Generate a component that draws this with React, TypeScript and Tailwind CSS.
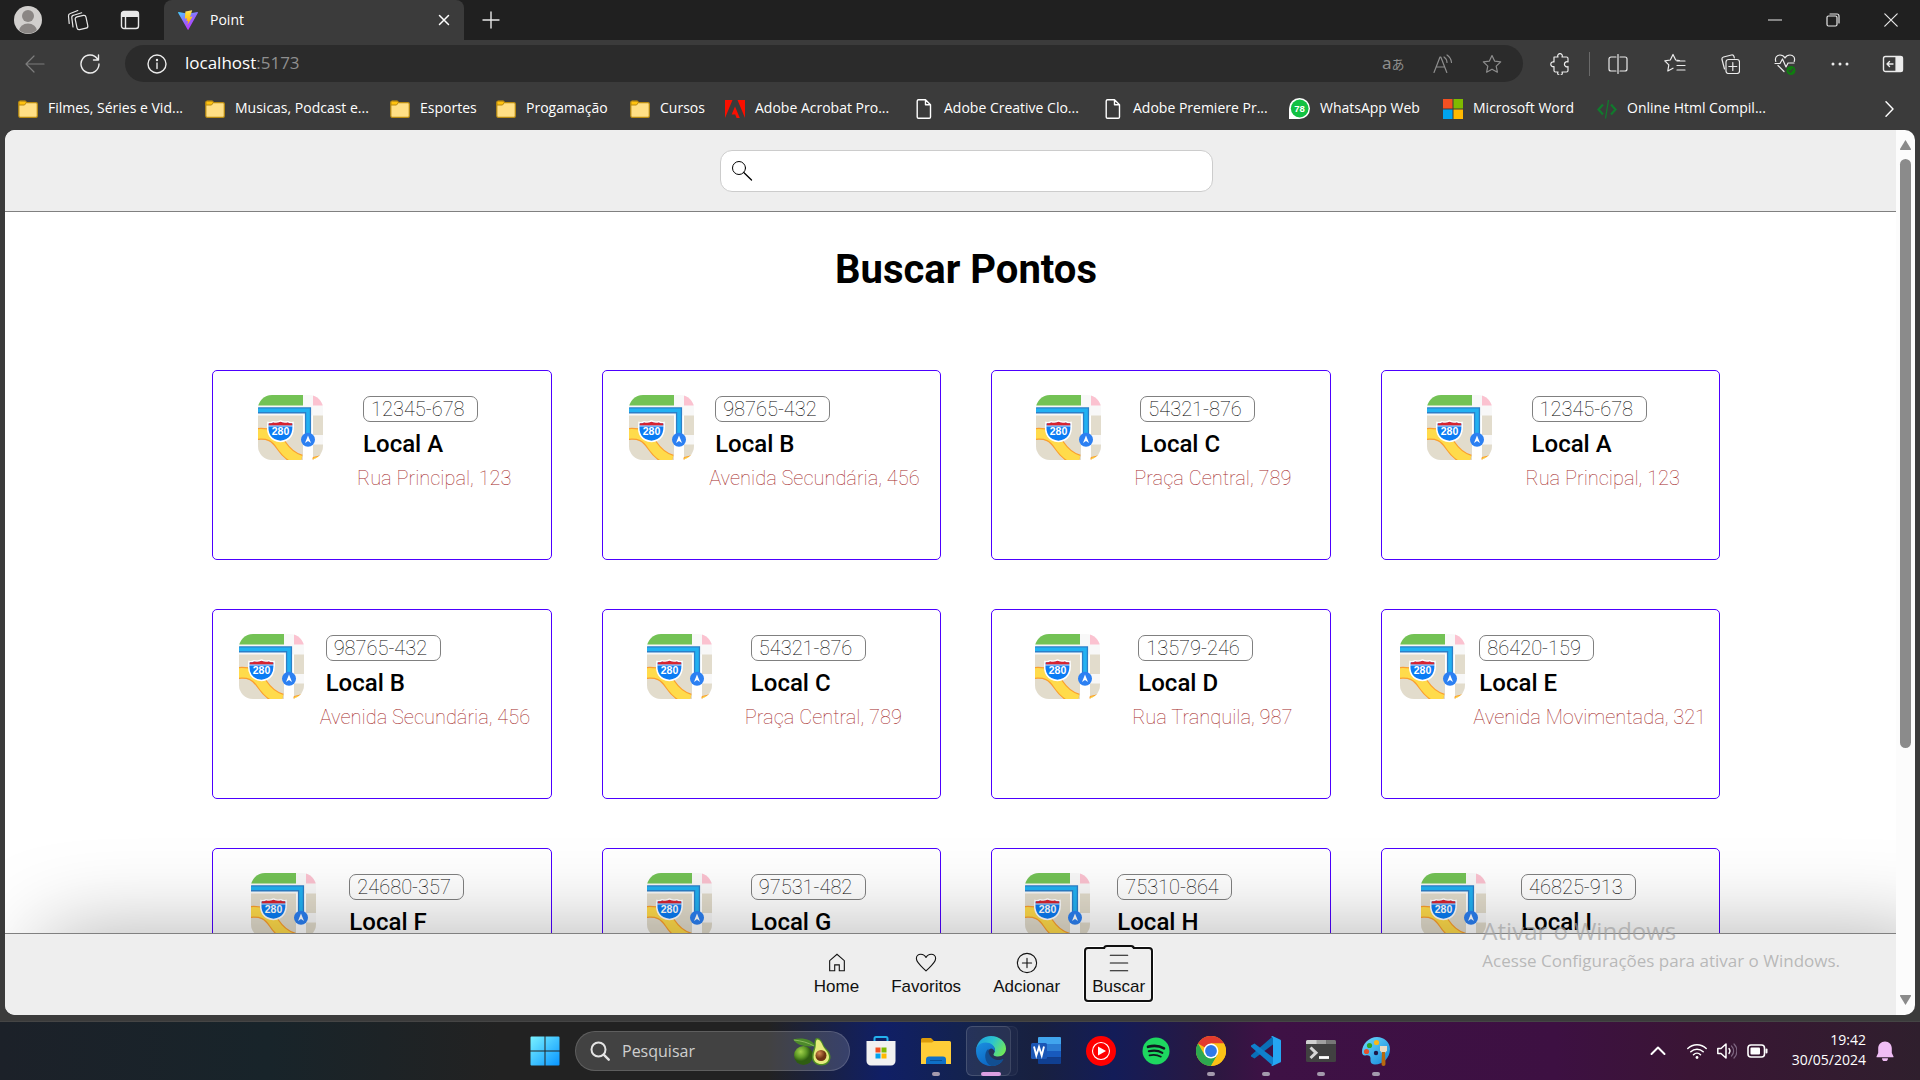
import React from "react";

const UI = "font-['Open_Sans',sans-serif]";

type IconProps = { className?: string; children: React.ReactNode; box?: string };

function Line({ className = "size-5", children, box = "0 0 20 20" }: IconProps) {
  return (
    <svg viewBox={box} className={className} fill="none" stroke="currentColor" strokeWidth="1.2" strokeLinecap="round" strokeLinejoin="round" aria-hidden="true">
      {children}
    </svg>
  );
}

/* ---------- Browser chrome ---------- */

function ViteLogo() {
  return (
    <svg viewBox="0 0 20 20" className="size-5" aria-hidden="true">
      <defs>
        <linearGradient id="viteA" x1="0" y1="0" x2="0.6" y2="1">
          <stop offset="0" stopColor="#41d1ff" />
          <stop offset="0.5" stopColor="#8f6bff" />
          <stop offset="1" stopColor="#bd34fe" />
        </linearGradient>
        <linearGradient id="viteB" x1="0" y1="0" x2="0" y2="1">
          <stop offset="0" stopColor="#ffea83" />
          <stop offset="0.2" stopColor="#ffdd35" />
          <stop offset="1" stopColor="#ffa800" />
        </linearGradient>
      </defs>
      <path d="M19.8 2.9 10.5 19.6a.5.5 0 0 1-.9 0L.2 2.9a.5.5 0 0 1 .5-.8L10 3.8l9.3-1.7a.5.5 0 0 1 .5.8Z" fill="url(#viteA)" />
      <path d="M14.2.2 7.4 1.5l-.5 7.2 2.2-.4-.6 3 1.7-.5-.9 4.1 5.3-8.3-2.6.5Z" fill="url(#viteB)" />
    </svg>
  );
}

function TabStrip() {
  return (
    <div className="flex h-10 shrink-0 items-center bg-[#202020] text-[#e8e8e8]">
      <div className="flex h-10 w-[164px] shrink-0 items-center gap-[25px] pl-[14px]">
        <button aria-label="Perfil">
          <svg viewBox="0 0 28 28" className="size-7" aria-hidden="true">
            <defs><clipPath id="avatar"><circle cx="14" cy="14" r="13.5" /></clipPath></defs>
            <circle cx="14" cy="14" r="14" fill="#d1cfcd" />
            <g clipPath="url(#avatar)" fill="#8a8684">
              <circle cx="14" cy="10" r="6" />
              <ellipse cx="14" cy="25" rx="9" ry="7.5" />
            </g>
          </svg>
        </button>
        <button aria-label="Espaços de trabalho">
          <Line className="size-[22px]" box="0 0 22 22">
            <rect x="9" y="7" width="11" height="13" rx="2.2" transform="rotate(-12 14.5 13.5)" />
            <path d="M6 18 4.800 8.800a2.400 2.400 0 0 1 1.900-2.600l8-2.400" />
            <path d="M2.200 14.500 1.500 7a2.400 2.400 0 0 1 1.800-2.500l7.500-3" />
          </Line>
        </button>
        <button aria-label="Menu de guias" className="ml-1.5">
          <Line>
            <rect x="1.5" y="1.5" width="17" height="17" rx="2.5" strokeWidth="1.4" />
            <path d="M2 2.5h16v4H2Z" fill="currentColor" />
            <path d="M5.500 7v11" strokeWidth="1.4" />
          </Line>
        </button>
      </div>
      <div className={`flex h-10 w-[300px] shrink-0 items-center rounded-t-lg bg-[#3b3b3b] pr-2.5 pl-[14px] text-[14px] text-white ${UI}`}>
        <ViteLogo />
        <span className="ml-3 flex-1 pb-px">Point</span>
        <button aria-label="Fechar guia" className="grid size-5 place-items-center">
          <Line className="size-3" box="0 0 12 12"><path d="m1.500 1.500 9 9m0-9-9 9" strokeWidth="1.5" /></Line>
        </button>
      </div>
      <button aria-label="Nova guia" className="ml-[18px]">
        <Line className="size-[18px]" box="0 0 18 18"><path d="M9 1v16M1 9h16" strokeWidth="1.4" /></Line>
      </button>
      <div className="ml-auto flex h-10">
        <button aria-label="Minimizar" className="grid w-[58px] place-items-center"><Line className="size-3.5" box="0 0 14 14"><path d="M.5 7h13" /></Line></button>
        <button aria-label="Restaurar" className="grid w-[58px] place-items-center">
          <Line className="size-3.5" box="0 0 14 14"><rect x="1" y="3" width="10" height="10" rx="1.5" /><path d="M4 1h7a2 2 0 0 1 2 2v7" /></Line>
        </button>
        <button aria-label="Fechar" className="grid w-[58px] place-items-center"><Line className="size-3.5" box="0 0 14 14"><path d="m.8.8 12.400 12.400m0-12.400L.8 13.200" /></Line></button>
      </div>
    </div>
  );
}

const STAR = "m10 1.500 2.600 5.600 6.100.8-4.500 4.200 1.200 6.100L10 15.200l-5.400 3 1.200-6.100L1.300 7.900l6.100-.8Z";

function Toolbar() {
  return (
    <div className="flex h-[47px] shrink-0 items-center text-[#ececec]">
      <button aria-label="Voltar" className="ml-[25px] text-[#7d7d7d]"><Line className="size-5"><path d="M19 10H1.500M9 2 1 10l8 8" /></Line></button>
      <button aria-label="Atualizar" className="ml-[35px]"><Line className="size-5"><path d="M17.500 5A9 9 0 1 0 19 10M18.500 1v5h-5" strokeWidth="1.4" /></Line></button>
      <div className="ml-[25px] flex h-[37px] flex-1 items-center rounded-full bg-[#2b2b2b] pr-[21px] pl-[22px]">
        <Line className="size-5"><circle cx="10" cy="10" r="9" strokeWidth="1.4" /><path d="M10 9v5.500" strokeWidth="1.4" /><circle cx="10" cy="6" r=".6" fill="currentColor" /></Line>
        <span className={`ml-[18px] flex-1 pb-px text-[17px] leading-6 text-[#8f8f8f] ${UI}`}><span className="text-white">localhost</span>:5173</span>
        <div className="flex items-center gap-[29px] text-[#8e8e8e]">
          <button aria-label="Traduzir" className="flex w-[22px] items-baseline whitespace-nowrap"><span className="font-['Noto_Sans',sans-serif] text-[17px] leading-5">a</span><span className="font-['Noto_Sans_CJK_JP',sans-serif] text-[13px] leading-5">あ</span></button>
          <button aria-label="Ler em voz alta">
            <Line><path d="M1 18.500 7 3h.8l6 15.500M3.300 13h8.300M11 3a7 7 0 0 1 3 5.500M14 1a10 10 0 0 1 4.500 7.500" /></Line>
          </button>
          <button aria-label="Adicionar aos favoritos"><Line><path d={STAR} /></Line></button>
        </div>
      </div>
      <div className="flex items-center pr-[16px] pl-[26px]">
        <button aria-label="Extensões">
          <Line className="size-[22px]" box="0 0 22 22"><path d="M5 4h4a2.300 2.300 0 1 1 4 0h4.500a1.500 1.500 0 0 1 1.500 1.500V9a2.500 2.500 0 1 0 0 4.500v4a1.500 1.500 0 0 1-1.500 1.500H13a2.300 2.300 0 1 1-4 0H6.500A1.500 1.500 0 0 1 5 17.500V13.500a2.400 2.400 0 1 1 0-4.500Z" /></Line>
        </button>
        <span className="ml-[18px] h-6 w-px bg-[#6a6a6a]" />
        <div className="ml-[18px] flex items-center gap-[34px]">
          <button aria-label="Tela dividida"><Line><path d="M8 3H3a2 2 0 0 0-2 2v10a2 2 0 0 0 2 2h5M12 3h5a2 2 0 0 1 2 2v10a2 2 0 0 1-2 2h-5M10 .5v19" /></Line></button>
          <button aria-label="Favoritos" className="ml-0.5"><Line className="size-[22px]" box="0 0 22 22"><path d="M15.500 7.500 11.700 7 9 1.500 6.300 7l-5.500.8 4 4-1 6.200L9 15.200M13 8h8M13 12.500h8M13 17h8" /></Line></button>
          <button aria-label="Coleções"><Line><path d="M4.500 15 2 5.500A2.200 2.200 0 0 1 3.500 3l8-2A2.200 2.200 0 0 1 14 2.500l.3 1.500" /><rect x="6" y="5.5" width="13.5" height="14" rx="2.5" /><path d="M12.800 8.500v8M8.800 12.500h8" /></Line></button>
          <button aria-label="Desempenho">
            <Line className="size-[22px]" box="0 0 22 22"><path d="M1.800 8.500C.5 4.500 3 2 6 2c2.500 0 4 1.200 5 3 1-1.800 2.500-3 5-3 3.200 0 5.500 2.500 4.200 6.500M4 12.500l6 6M1 10.500h5L8.500 6l3.500 8 2-4h6" /><circle cx="17" cy="17.5" r="4.500" fill="#107c10" stroke="none" /><path d="m15 17.500 1.500 1.500 2.500-3" stroke="#3b3b3b" /></Line>
          </button>
          <button aria-label="Configurações e mais"><Line><g fill="currentColor" stroke="none"><circle cx="3" cy="10" r="1.5" /><circle cx="10" cy="10" r="1.5" /><circle cx="17" cy="10" r="1.5" /></g></Line></button>
          <button aria-label="Barra lateral" className="-ml-0.5"><Line className="size-[22px]" box="0 0 22 22"><rect x="1.5" y="3.5" width="19" height="15" rx="2" strokeWidth="1.4" /><path d="M14 4h6v14h-6Z" fill="currentColor" /><path d="M11 11H5M7.500 8.500 5 11l2.500 2.500" strokeWidth="1.4" /></Line></button>
        </div>
      </div>
    </div>
  );
}

function Folder() {
  return (
    <svg viewBox="0 0 20 20" className="size-5" aria-hidden="true">
      <path d="M.8 3.500A1.500 1.500 0 0 1 2.300 2h5l1.500 1.700H18a1.300 1.300 0 0 1 1.300 1.300v12a1.300 1.300 0 0 1-1.300 1.300H2A1.300 1.300 0 0 1 .8 17Z" fill="#ffdf85" stroke="#b98a10" strokeWidth="1.2" />
      <path d="M1 6V3.500A1.300 1.300 0 0 1 2.300 2.200H7l1.300 1.500L6.500 6Z" fill="#ffc20e" stroke="#b98a10" />
    </svg>
  );
}
const PageIcon = () => (
  <Line><path d="M4.500.8h7l5 5V18a1.300 1.300 0 0 1-1.300 1.300H4.500A1.300 1.300 0 0 1 3.200 18V2A1.300 1.300 0 0 1 4.500.8ZM11.500.8v5h5" strokeWidth="1.4" /></Line>
);
const Acrobat = () => (
  <svg viewBox="0 0 20 20" className="size-5" fill="#fa0f00" aria-hidden="true"><path d="M0 1h7.500L0 19ZM12.500 1H20v18ZM10 7.500 14.800 19h-3.200l-1.400-3.600H6.700Z" /></svg>
);
const WhatsApp = () => (
  <svg viewBox="0 0 22 22" className="size-[21px]" aria-hidden="true">
    <path d="M0 22V11a11 11 0 1 1 11 11Z" fill="#fff" />
    <circle cx="11.2" cy="11" r="9.3" fill="#12c143" />
    <text x="11" y="14.7" textAnchor="middle" fontSize="10" fontWeight="700" fill="#fff" fontFamily="Liberation Sans, sans-serif">78</text>
  </svg>
);
const Microsoft = () => (
  <svg viewBox="0 0 20 20" className="size-5" aria-hidden="true">
    <path d="M0 0h9.500v9.500H0Z" fill="#f25022" /><path d="M10.500 0H20v9.500h-9.500Z" fill="#7fba00" /><path d="M0 10.500h9.500V20H0Z" fill="#00a4ef" /><path d="M10.500 10.500H20V20h-9.500Z" fill="#ffb900" />
  </svg>
);
const CodeIcon = () => (
  <svg viewBox="0 0 20 20" className="size-5" fill="none" stroke="#117a2d" strokeWidth="2" aria-hidden="true"><path d="m6 5.500-4.500 5L6 15.500M14 5.500l4.500 5-4.500 5" strokeWidth="2.2" /><path d="M11.500 1 8.500 19.500" strokeWidth="1.3" /></svg>
);

const BOOKMARKS: { label: string; width: string; icon: React.ReactNode }[] = [
  { label: "Filmes, Séries e Vid...", width: "w-[187px]", icon: <Folder /> },
  { label: "Musicas, Podcast e...", width: "w-[185px]", icon: <Folder /> },
  { label: "Esportes", width: "w-[106px]", icon: <Folder /> },
  { label: "Progamação", width: "w-[134px]", icon: <Folder /> },
  { label: "Cursos", width: "w-[95px]", icon: <Folder /> },
  { label: "Adobe Acrobat Pro...", width: "w-[189px]", icon: <Acrobat /> },
  { label: "Adobe Creative Clo...", width: "w-[189px]", icon: <PageIcon /> },
  { label: "Adobe Premiere Pr...", width: "w-[186px]", icon: <PageIcon /> },
  { label: "WhatsApp Web", width: "w-[154px]", icon: <WhatsApp /> },
  { label: "Microsoft Word", width: "w-[154px]", icon: <Microsoft /> },
  { label: "Online Html Compil...", width: "w-[187px]", icon: <CodeIcon /> },
];

function Bookmarks() {
  return (
    <nav className={`flex h-[43px] shrink-0 items-center pl-[18px] text-[14px] text-white ${UI}`}>
      {BOOKMARKS.map((b) => (
        <a key={b.label} href="#" className={`flex shrink-0 items-center gap-2.5 whitespace-nowrap ${b.width}`}>{b.icon}<span className="pb-0.5">{b.label}</span></a>
      ))}
      <button aria-label="Mais favoritos" className="mr-[22px] ml-auto"><Line className="h-4 w-[18px]" box="0 0 18 16"><path d="m6 .8 7 7.200-7 7.200" strokeWidth="1.4" /></Line></button>
    </nav>
  );
}

/* ---------- Page ---------- */

function MapIcon() {
  return (
    <svg viewBox="0 0 65 65" className="size-[65px] shrink-0" aria-hidden="true">
      <defs><clipPath id="mapClip"><rect width="65" height="65" rx="14" /></clipPath></defs>
      <g clipPath="url(#mapClip)">
        <rect width="65" height="65" fill="#f8f8f8" />
        <rect width="45" height="10.5" fill="#73c255" />
        <rect x="55" width="10" height="10.5" fill="#fbc2d0" />
        <rect y="20.5" width="45" height="45" fill="#e2dccc" />
        <rect x="55" y="20.5" width="10" height="19.5" fill="#e2dccc" />
        <rect x="55" y="49.5" width="10" height="16" fill="#e2dccc" />
        <path d="M-1 39c12-1 18 2 24 11 5 7.500 11 13 20 15.500" fill="none" stroke="#fb9f2f" strokeWidth="12" />
        <path d="M-1 39c12-1 18 2 24 11 5 7.500 11 13 20 15.500" fill="none" stroke="#ffdb4b" strokeWidth="9.5" />
        <rect x="45" y="20.5" width="10" height="45" fill="#fff" />
        <path d="M55 62.500q5-.5 10-3.500v6H55Z" fill="#ffdb4b" stroke="#fb9f2f" />
        <path d="M0 15.300h50V40" fill="none" stroke="#2b7fc8" strokeWidth="6.2" />
        <path d="M0 15.300h50V40" fill="none" stroke="#22b1f2" strokeWidth="3.6" />
        <path d="M10 27.500q2.500.8 5-.8 4 1.300 7.500-.7 3.500 2 7.500.7 2.500 1.600 5 .8Q37 45 22.500 46.500 7.500 45 10 27.500Z" fill="#0b7cf4" stroke="#fff" strokeWidth="1.5" />
        <path d="M10.800 28.200q2 .5 4.400-.8 4 1.200 7.300-.7 3.500 1.900 7.300.7 2.400 1.300 4.400.8v2.300H10.800Z" fill="#d8232f" />
        <path d="M10 31h25" stroke="#fff" strokeWidth=".8" />
        <text x="22.5" y="40" textAnchor="middle" fontSize="10.5" fontWeight="700" fill="#fff" fontFamily="Liberation Sans, sans-serif">280</text>
        <circle cx="50" cy="44.7" r="7" fill="#2c80f2" />
        <path d="m50 40.500 3 7.500-3-2-3 2Z" fill="#fff" />
      </g>
    </svg>
  );
}

const PLACES = [
  ["12345-678", "Local A", "Rua Principal, 123"],
  ["98765-432", "Local B", "Avenida Secundária, 456"],
  ["54321-876", "Local C", "Praça Central, 789"],
  ["12345-678", "Local A", "Rua Principal, 123"],
  ["98765-432", "Local B", "Avenida Secundária, 456"],
  ["54321-876", "Local C", "Praça Central, 789"],
  ["13579-246", "Local D", "Rua Tranquila, 987"],
  ["86420-159", "Local E", "Avenida Movimentada, 321"],
  ["24680-357", "Local F", "Avenida Central, 654"],
  ["97531-482", "Local G", "Praça Central, 147"],
  ["75310-864", "Local H", "Rua das Palmeiras, 55"],
  ["46825-913", "Local I", "Rua das Flores, 567"],
];

function PlaceCard({ code, name, address }: { code: string; name: string; address: string }) {
  return (
    <article className="flex h-[190px] items-start justify-evenly rounded-[5px] border border-[#4d00ff] pt-6">
      <div className="pl-3"><MapIcon /></div>
      <div className="flex flex-col items-start pl-px pr-1.5">
        <span className="mt-px ml-1.5 h-[26px] w-[115px] rounded-[7px] border border-[#808080] pl-[7px] text-[20px] leading-6 font-thin text-black">{code}</span>
        <h2 className="mt-2 ml-1.5 text-[24px] leading-7 font-medium text-black">{name}</h2>
        <p className="mt-2 text-[20px] leading-6 font-thin whitespace-nowrap text-[#a52a2a]">{address}</p>
      </div>
    </article>
  );
}

const NAV: { label: string; active?: boolean; icon: React.ReactNode }[] = [
  { label: "Home", icon: <path d="M4 20.500V9.500L12 2.500l8 7v11h-5.500V14h-5v6.500Z" strokeLinejoin="miter" /> },
  { label: "Favoritos", icon: <path d="M12 20.500C8 16.500 1.500 12 1.500 7.200 1.500 4.500 3.600 2.500 6.300 2.500c2.500 0 4.500 1.200 5.700 3.500 1.200-2.300 3.200-3.500 5.700-3.500 2.700 0 4.800 2 4.800 4.700 0 4.800-6.500 9.300-10.500 13.300Z" /> },
  { label: "Adcionar", icon: <><circle cx="12" cy="12" r="10.5" /><path d="M12 7v10M7 12h10" /></> },
  { label: "Buscar", active: true, icon: <path d="M2.500 3.500h19M2.500 12h19M2.500 20.500h19" /> },
];

function Site() {
  return (
    <div className="flex min-w-0 flex-1 flex-col overflow-hidden bg-white font-[Roboto,sans-serif]">
      <header className="flex h-[82px] shrink-0 items-center justify-center border-b border-[#808080] bg-[#eee] pl-[31px]">
        <div className="flex h-[42px] w-[493px] items-center rounded-xl border border-[#ccc] bg-white pl-[10px]">
          <label htmlFor="busca" aria-label="Buscar" className="text-black">
            <Line className="size-[22px]" box="0 0 22 22"><circle cx="8" cy="8" r="6.5" strokeWidth="1" /><path d="m12.800 12.500 7.700 7.500" strokeWidth="1.3" /></Line>
          </label>
          <input id="busca" type="text" className="ml-2 h-9 flex-1 bg-transparent text-[16px] outline-none" />
        </div>
      </header>
      <main className="min-h-0 flex-1 overflow-hidden pl-[31px]">
        <h1 className="pt-[34px] text-center text-[40px] leading-[48px] font-bold text-black">Buscar Pontos</h1>
        <div className="mt-[76px] grid grid-cols-4 gap-x-[50px] gap-y-[49px] px-44">
          {PLACES.map(([code, name, address], i) => (
            <PlaceCard key={i} code={code} name={name} address={address} />
          ))}
        </div>
      </main>
      <nav className="relative flex h-[82px] shrink-0 items-center justify-center gap-4 border-t border-[#808080] bg-[#eee] pl-[58px] font-['Liberation_Sans',sans-serif] text-[17px] text-[#111] shadow-[40px_5px_90px_rgba(0,0,0,0.35)]">
        {NAV.map((n) => (
          <a key={n.label} href="#" className={`relative flex h-[55px] flex-col items-center rounded-[4px] border-2 px-1.5 pt-[3px] ${n.active ? "border-[#101010] shadow-[0_0_0_1px_white]" : "border-transparent"}`}>
            {n.active && <span className="absolute -top-1 left-1/2 h-1 w-8 -translate-x-1/2 rounded-t-[4px] border-2 border-b-0 border-[#101010] bg-[#eee]" />}
            <Line className="size-6" box="0 0 24 24">{n.icon}</Line>
            <span className="leading-[26px]">{n.label}</span>
          </a>
        ))}
      </nav>
    </div>
  );
}

function Scrollbar() {
  return (
    <div className="flex w-[19px] shrink-0 flex-col items-center bg-[#fcfcfc] py-[9px]">
      <svg viewBox="0 0 13 12" className="h-3 w-[13px]" fill="#8b8b8b" aria-hidden="true"><path d="M6.500 1 12 10q.3 1-.7 1H1.700q-1 0-.7-1Z" /></svg>
      <div className="mt-2 flex w-[11px] flex-1 flex-col"><div className="h-[70.5%] rounded-full bg-[#8b8b8b]" /></div>
      <svg viewBox="0 0 13 12" className="h-3 w-[13px] rotate-180" fill="#8b8b8b" aria-hidden="true"><path d="M6.500 1 12 10q.3 1-.7 1H1.700q-1 0-.7-1Z" /></svg>
    </div>
  );
}

/* ---------- Taskbar ---------- */

const Art = ({ children }: { children: React.ReactNode }) => (
  <svg viewBox="0 0 30 30" className="size-[30px]" aria-hidden="true">{children}</svg>
);

const StartIcon = () => (
  <Art>
    <defs><linearGradient id="win" x1="0" y1="0" x2="30" y2="30" gradientUnits="userSpaceOnUse"><stop stopColor="#7bf3ff" /><stop offset="1" stopColor="#0693ff" /></linearGradient></defs>
    <path d="M1.500.5h13v14h-14v-13a1 1 0 0 1 1-1ZM15.500.5h13a1 1 0 0 1 1 1v13h-14ZM.5 15.500h14v14h-13a1 1 0 0 1-1-1ZM15.500 15.500h14v13a1 1 0 0 1-1 1h-13Z" fill="url(#win)" />
  </Art>
);

const Avocado = () => (
  <svg viewBox="0 0 38 29" className="h-[29px] w-[38px]" aria-hidden="true">
    <defs>
      <radialGradient id="avoc" cx="0.35" cy="0.3"><stop stopColor="#a3d24d" /><stop offset="0.6" stopColor="#5f9a26" /><stop offset="1" stopColor="#2f5d12" /></radialGradient>
      <radialGradient id="pit" cx="0.35" cy="0.3"><stop stopColor="#d38a52" /><stop offset="1" stopColor="#6d3412" /></radialGradient>
    </defs>
    <circle cx="10.5" cy="18.5" r="9.5" fill="url(#avoc)" />
    <path d="M0 2.500C8 .5 19 1.500 22 9 14 10 5 9.500 0 2.500Z" fill="#4c8a2a" />
    <path d="M1 3c8 1 14 2.500 20 6" stroke="#9ac46a" strokeWidth=".8" fill="none" />
    <path d="M24 1c3 0 5 3 6.500 7 1.500 3.500 7 6 7 12 0 5-4 8.500-9 8.500s-9.500-3-9.500-8.500c0-6 2.500-8 2.500-12.500 0-3.500.5-6.500 2.500-6.500Z" fill="#4f8f23" />
    <path d="M24.500 2.500c2.500 0 4 3 5.500 6.500 1.500 3.500 6 6 6 11 0 4.500-3.500 7-7.700 7S20.500 24.500 20.500 20c0-5 2.300-8 2.300-12 0-3 .2-5.500 1.700-5.500Z" fill="#e5ec7d" />
    <circle cx="28" cy="18.5" r="5.5" fill="url(#pit)" />
  </svg>
);

const Store = () => (
  <Art>
    <path d="M8.500 5V2.500a1.500 1.500 0 0 1 1.500-1.500h10a1.500 1.500 0 0 1 1.500 1.500V5" fill="none" stroke="#24b1ee" strokeWidth="2" />
    <path d="M.5 5h29v20a4.500 4.500 0 0 1-4.500 4.500H5A4.500 4.500 0 0 1 .5 25Z" fill="#f1f1f1" />
    <path d="M9.500 11.500h5v5h-5Z" fill="#f25022" /><path d="M15.500 11.500h5v5h-5Z" fill="#7fba00" /><path d="M9.500 17.500h5v5h-5Z" fill="#00a4ef" /><path d="M15.500 17.500h5v5h-5Z" fill="#ffb900" />
  </Art>
);
const Explorer = () => (
  <Art>
    <path d="M0 8V3.500A1.500 1.500 0 0 1 1.500 2H10l3 3v6H0Z" fill="#dc9b0a" />
    <path d="M0 6.500h11L13 5h15.500A1.500 1.500 0 0 1 30 6.500V28H0Z" fill="#ffcd38" />
    <path d="M5 28v-4.500A3 3 0 0 1 8 20.500h14a3 3 0 0 1 3 3V28Z" fill="#0f70c8" /><path d="M9 24.500h12" stroke="#0a4f95" />
  </Art>
);
const Edge = () => (
  <Art>
    <defs>
      <linearGradient id="edA" x1="0" y1="0.2" x2="1" y2="0.6"><stop stopColor="#1d9fe0" /><stop offset="0.5" stopColor="#2cc4ce" /><stop offset="1" stopColor="#6fe95a" /></linearGradient>
      <linearGradient id="edB" x1="0" y1="0" x2="0.6" y2="1"><stop stopColor="#1b8fe0" /><stop offset="1" stopColor="#0b63c0" /></linearGradient>
    </defs>
    <path d="M0 14.500C.5 6 7 0 15 0c8.500 0 15 6 15 12.500 0 4.500-3.500 8-8 8-3.500 0-5.200-1.300-4.200-2.800.8-1.200 1.200-2 1.200-3.200C19 10 14.500 8 10 8 5 8 1 10.500 0 14.500Z" fill="url(#edA)" />
    <path d="M0 15c0-4.800 4-8.500 9.500-8.500 5.500 0 9.500 3.500 9.500 8 0 .5 0 1-.2 1.500-.5-2-2-3.500-3.800-3.500-3 1-4 3.500-3.500 7 .8 5 5 7.500 9 7.500 3 0 5-1 6.500-3C24.500 28 20 30 15 30 6.500 30 0 23.500 0 15Z" fill="url(#edB)" />
    <path d="M12.500 12.800C7.500 16 8 27.500 15.500 30c5.500 0 9.500-2.500 11.800-6.500.2-.5-.2-.8-.6-.6C25.500 23.500 24 24 22 24c-5.500 0-10.500-5-9.500-11.200Z" fill="#124f92" />
  </Art>
);
const Word = () => (
  <Art>
    <path d="M8 1h21a1 1 0 0 1 1 1v6H7V2a1 1 0 0 1 1-1Z" fill="#41a5ee" /><path d="M7 8h23v7H7Z" fill="#2b7cd3" /><path d="M7 15h23v6.500H7Z" fill="#185abd" /><path d="M7 21.500h23V27a1 1 0 0 1-1 1H8a1 1 0 0 1-1-1Z" fill="#103f91" />
    <rect x="0" y="7" width="16" height="16" rx="1.5" fill="#1a56b5" />
    <path d="m3 10.500 2.300 9L8 11l2.700 8.500 2.300-9" fill="none" stroke="#fff" strokeWidth="1.9" />
  </Art>
);
const YTMusic = () => (
  <Art><circle cx="15" cy="15" r="15" fill="#f00" /><circle cx="15" cy="15" r="8.5" fill="none" stroke="#fff" strokeWidth="1.1" /><path d="M12 10.500 20 15l-8 4.500Z" fill="#fff" /></Art>
);
const Spotify = () => (
  <Art><circle cx="15" cy="15" r="13.5" fill="#1ed760" /><g fill="none" stroke="#101820" strokeLinecap="round"><path d="M7 10.800c6-1.600 11.500-1 16 1.600" strokeWidth="2.6" /><path d="M7.800 15.300c5-1.300 9.700-.8 13.600 1.500" strokeWidth="2.1" /><path d="M8.500 19.300c4.300-1 8-.5 11.400 1.400" strokeWidth="1.7" /></g></Art>
);
const Chrome = () => (
  <Art>
    <circle cx="15" cy="15" r="15" fill="#fbc116" />
    <path d="M2 7.500A15 15 0 0 1 28 7.500H15L8.500 11.250Z" fill="#e33b2e" />
    <path d="M2 7.500A15 15 0 0 0 15 30l6.500-11.250L15 15 8.500 18.750Z" fill="#2da94f" />
    <path d="M28 7.500H15v7.500l6.500 3.750L15 30A15 15 0 0 0 28 7.500Z" fill="#fbc116" />
    <circle cx="15" cy="15" r="7.4" fill="#fff" /><circle cx="15" cy="15" r="5.9" fill="#3079e8" />
  </Art>
);
const VSCode = () => (
  <Art>
    <path d="M22 0v8.500L3.500 22.500 0 20.500v-1.200Z" fill="#0a6fb8" /><path d="M22 30v-8.500L3.500 7.500 0 9.500v1.200Z" fill="#0f80cc" />
    <path d="M21.500 0 29 3.400a1.500 1.500 0 0 1 1 1.400v20.400a1.500 1.500 0 0 1-1 1.400L21.500 30c-.6 0-1.200-.4-1.200-.4L22 28V2L20.300.4S21 0 21.500 0Z" fill="#25a6f2" />
  </Art>
);
const Terminal = () => (
  <Art>
    <rect y="4" width="30" height="22" rx="1.5" fill="#414141" /><path d="M0 8V5.500A1.500 1.500 0 0 1 1.500 4H15v4Z" fill="#cfcfcf" /><path d="M10.500 4h10v4h-10Z" fill="#a0a0a0" /><path d="M20.500 4h8A1.500 1.500 0 0 1 30 5.500V8h-9.500Z" fill="#777" />
    <path d="m4.500 11.500 5.500 5.300-5.500 5.200" fill="none" stroke="#d6d6d6" strokeWidth="3" /><path d="M13 21.500h10" stroke="#fff" strokeWidth="2.8" />
  </Art>
);
const Paint = () => (
  <Art>
    <defs><linearGradient id="pal" x1="0" y1="0" x2="1" y2="1"><stop stopColor="#6fdcff" /><stop offset="1" stopColor="#1286d8" /></linearGradient></defs>
    <path d="M16 1C8 1 1 8 1 16c0 2.500 1.500 4 3.500 3.500 3-.7 5 .5 5 3 0 2-.5 6 4.500 6C22 28.500 29 22 29 13 29 6 23 1 16 1Z" fill="url(#pal)" />
    <circle cx="15.5" cy="6.5" r="2.6" fill="#f8b81c" /><circle cx="8.5" cy="9.5" r="2.6" fill="#2aa52f" /><circle cx="5.5" cy="15.5" r="2.6" fill="#e5502b" /><circle cx="15" cy="17" r="2.2" fill="#1d1747" />
    <path d="M19 10h7v4.500l-1.500 2h-4l-1.500-2Z" fill="#e9dcc4" /><path d="M21 16h3l.5 12a1.800 1.800 0 0 1-4 0Z" fill="#b8690f" />
  </Art>
);

const APPS: { name: string; icon: React.ReactNode; state?: "open" | "active" }[] = [
  { name: "Microsoft Store", icon: <Store /> },
  { name: "Explorador de Arquivos", icon: <Explorer />, state: "open" },
  { name: "Microsoft Edge", icon: <Edge />, state: "active" },
  { name: "Word", icon: <Word /> },
  { name: "YouTube Music", icon: <YTMusic /> },
  { name: "Spotify", icon: <Spotify /> },
  { name: "Google Chrome", icon: <Chrome />, state: "open" },
  { name: "Visual Studio Code", icon: <VSCode />, state: "open" },
  { name: "Terminal", icon: <Terminal />, state: "open" },
  { name: "Paint", icon: <Paint />, state: "open" },
];

function Taskbar() {
  return (
    <footer className={`flex h-[59px] shrink-0 items-center border-t border-[#454545] bg-[linear-gradient(90deg,#1c2129_0%,#18242a_14%,#222_26%,#222_40%,#101f66_46%,#14234a_51%,#18203f_54%,#131c58_58%,#2a1840_63%,#3e1145_66%,#3d1042_81%,#3a1535_88%,#2f1f2d_100%)] text-white ${UI}`}>
      <div className="flex-1 pl-[26px]" />
      <div className="flex h-full items-center">
        <button aria-label="Iniciar" className="grid w-[55px] place-items-center"><StartIcon /></button>
        <label className="mx-[3px] flex h-10 w-[275px] items-center rounded-full border border-white/15 bg-white/15 pr-[18px] pl-[14px]">
          <Line className="size-5 text-[#e4e4e4]"><circle cx="8.5" cy="8.5" r="7" strokeWidth="2" /><path d="m13.700 13.700 5 5" strokeWidth="2.4" /></Line>
          <input type="search" aria-label="Pesquisar" placeholder="Pesquisar" className="ml-3 min-w-0 flex-1 bg-transparent text-[16px] outline-none placeholder:text-[#cfcfcf]" />
          <Avocado />
        </label>
        {APPS.map((a) => (
          <button key={a.name} aria-label={a.name} className="relative grid h-[50px] w-[55px] place-items-center">
            {a.state === "active" && <span className="absolute inset-y-0 right-0 left-[3px] rounded-md border border-white/5 bg-white/3" />}
            {a.state === "active" && <span className="absolute inset-y-0 right-[7px] left-[3px] rounded-md border border-white/10 bg-white/5" />}
            <span className="relative">{a.icon}</span>
            {a.state === "open" && <span className="absolute bottom-0 left-1/2 h-1 w-2 -translate-x-1/2 rounded-full bg-[#a49aad]" />}
            {a.state === "active" && <span className="absolute bottom-0 left-1/2 h-1 w-5 -translate-x-1/2 rounded-full bg-[#dc9fe2]" />}
          </button>
        ))}
      </div>
      <div className="flex flex-1 items-center justify-end pr-[26px]">
        <Line className="h-5 w-4" box="0 0 16 20"><path d="m1.500 13 6.500-6.500 6.500 6.500" strokeWidth="2" /></Line>
        <Line className="ml-[21px] size-5"><path d="M.8 7.500a13 13 0 0 1 18.400 0M3.800 10.700a9 9 0 0 1 12.400 0M6.500 13.700a5 5 0 0 1 7 0" strokeWidth="1.5" /><circle cx="10" cy="16.5" r="1.4" fill="currentColor" stroke="none" /></Line>
        <Line className="ml-2.5 size-5"><path d="M.8 7.500H4L9 3v14l-5-4.500H.8Z" strokeWidth="1.5" /><path d="M12 7.500a4 4 0 0 1 0 5" strokeWidth="1.3" /><path d="M14.500 5a7 7 0 0 1 0 10M17 3a10 10 0 0 1 0 14" stroke="#7d6580" /></Line>
        <Line className="ml-2.5 h-5 w-[21px]" box="0 0 21 20"><rect x="1" y="4" width="16.5" height="12" rx="3" strokeWidth="1.6" /><rect x="3.5" y="6.5" width="9.5" height="7" rx="1" fill="currentColor" stroke="none" /><path d="M19.500 8.500v3" strokeWidth="2" /></Line>
        <div className="ml-6 pb-0.5 text-right text-[14px] leading-5"><div>19:42</div><div>30/05/2024</div></div>
        <svg viewBox="0 0 18 20" className="ml-2.5 h-5 w-[18px]" fill="#f0bdf5" aria-hidden="true"><path d="M9 .5c4 0 6.800 3 6.800 6.800v4.700l1.700 3.500q.2.8-.7.8H1.200q-.9 0-.7-.8L2.200 12V7.300C2.200 3.500 5 .5 9 .5ZM6 17.300h6a3 3 0 0 1-6 0Z" /></svg>
      </div>
    </footer>
  );
}

export default function App() {
  return (
    <div className="relative flex h-screen flex-col overflow-hidden bg-[#3b3b3b]">
      <TabStrip />
      <Toolbar />
      <Bookmarks />
      <div className="mx-[5px] mb-1.5 flex min-h-0 flex-1 overflow-hidden rounded-[10px]">
        <Site />
        <Scrollbar />
      </div>
      <Taskbar />
      <div className={`pointer-events-none absolute right-20 bottom-[105px] text-[#a0a0a0]/70 ${UI}`}>
        <div className="text-[24px] leading-8">Ativar o Windows</div>
        <div className="text-[17px] leading-7">Acesse Configurações para ativar o Windows.</div>
      </div>
    </div>
  );
}
